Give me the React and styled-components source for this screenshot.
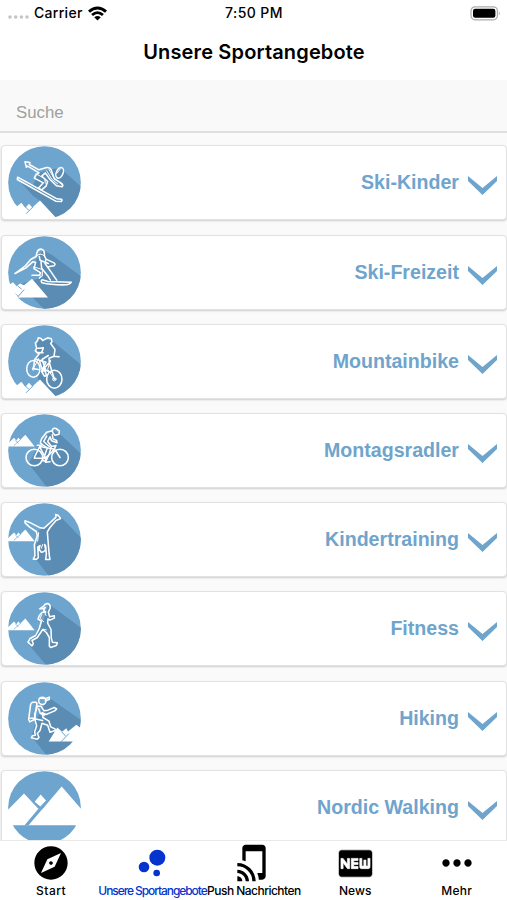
import styled, { createGlobalStyle } from 'styled-components'
import { MdExplore, MdBubbleChart, MdTapAndPlay, MdFiberNew, MdMoreHoriz } from 'react-icons/md'

const GlobalStyle = createGlobalStyle`
    * {
        box-sizing: border-box;
    }

    body {
        margin: 0;
        background: #FFF;
        font-family: Inter, "Liberation Sans", sans-serif;
        color: #000;
    }
`

const Screen = styled.div`
    display: flex;
    flex-direction: column;
    width: 507px;
    height: 900px;
    overflow: hidden;
`

const StatusBar = styled.div`
    display: grid;
    grid-template-columns: 1fr auto 1fr;
    align-items: center;
    height: 26px;
    flex: none;
    padding: 0 6px 0 8px;
    font-size: 14px;
    font-weight: 500;
    line-height: 26px;
`

const Carrier = styled.div`
    display: flex;
    align-items: center;
    gap: 5px;
    letter-spacing: 0.3px;
`

const Time = styled.span`
    margin-right: 1px;
    letter-spacing: 0.4px;
`

const Dots = styled.svg`
    margin-top: 8px;
`

const Battery = styled.div`
    display: flex;
    justify-content: flex-end;
`

const Header = styled.header`
    display: flex;
    align-items: center;
    justify-content: center;
    flex: none;
    height: 54px;
    padding-bottom: 2px;
`

const HeaderTitle = styled.h1`
    margin: 0 0 0 1px;
    font-size: 20px;
    font-weight: 600;
    letter-spacing: 0.15px;
`

const SearchInput = styled.input`
    flex: none;
    width: 100%;
    height: 52.5px;
    padding: 15px 16px 0;
    border: 0;
    border-bottom: 2px solid #DFDFDF;
    border-radius: 0;
    outline: none;
    background: #F9F9F9;
    font-family: "Liberation Sans", sans-serif;
    font-size: 16.8px;

    &::placeholder {
        color: #A0A0A0;
        opacity: 1;
    }
`

const List = styled.main`
    display: flex;
    flex-direction: column;
    gap: 14.2px;
    flex: 1;
    min-height: 0;
    overflow: hidden;
    padding: 12.9px 0 0 1px;
    background: #FAFAFA;
`

const Card = styled.section`
    display: flex;
    align-items: center;
    flex: none;
    height: 75px;
    padding: 0 9px 0 6px;
    border: 1px solid #E2E2E2;
    border-radius: 4px;
    background: #FFF;
    box-shadow: 0 1px 2px rgba(0, 0, 0, 0.18);
`

const CardTitle = styled.h2`
    flex: 1;
    margin: 0 9px 0 0;
    color: #6FA4CC;
    font-family: "Liberation Sans", sans-serif;
    font-size: 19.6px;
    font-weight: 700;
    text-align: right;
`

const Chevron = styled.svg`
    display: block;
    width: 29px;
    height: 19px;
    margin-top: 6px;
    fill: #6FA4CC;
`

const BadgeSvg = styled.svg`
    display: block;
    flex: none;
    width: 73px;
    height: 73px;
`

const TabBar = styled.nav`
    display: grid;
    grid-template-columns: repeat(5, 1fr);
    flex: none;
    height: 60px;
    border-top: 1px solid #E8E8E8;
    background: #FFF;
`

const Tab = styled.div`
    display: flex;
    flex-direction: column;
    align-items: center;
    padding: 2px 0 0 0.8px;
    min-width: 0;
    color: ${props => props.$active ? '#0433CE' : '#000'};
`

const TabIcon = styled.span`
    display: flex;
    align-items: center;
    justify-content: center;
    flex: none;
    height: 40px;

    svg {
        flex: none;
    }
`

/* a thin white outline widens the letters that are cut out of the icon */
const NewsIcon = styled(MdFiberNew)`
    stroke: #FFF;
    stroke-width: 0.4px;
`

const TabLabel = styled.span`
    font-size: 12px;
    font-weight: 500;
    line-height: 16px;
    letter-spacing: ${props => props.$spacing};
    white-space: nowrap;
`

const BLUE = '#6EA5CE'
const SHADE = '#5A8CB4'

function Badge({ shadow, children }) {
    return (
        <BadgeSvg viewBox="25 18.5 219 219" fill="none" stroke="#FFF" strokeWidth="4.6" strokeLinejoin="round" strokeLinecap="round">
            <circle cx="134.5" cy="128" r="109" fill={BLUE} stroke="none" />
            {shadow && (
                <>
                    <clipPath id="disc">
                        <circle cx="134.5" cy="128" r="109" />
                    </clipPath>
                    <path d={shadow} fill={SHADE} stroke="none" clipPath="url(#disc)" />
                </>
            )}
            {children}
        </BadgeSvg>
    )
}

/* small range on the left edge, shared by several badges */
function LeftPeaks({ y = 0 }) {
    return (
        <g transform={`translate(0 ${y})`} stroke="none">
            <path d="M24 116V108L43 90L50 98L56 90L62 96L77 81L105 116Z" fill="#FFF" />
            <path d="M43 113L63 95M48 99L56 105" stroke={BLUE} strokeWidth="2" />
        </g>
    )
}

/* peaks cut out of the lower edge */
function BottomPeaks() {
    return (
        <g stroke="none">
            <path d="M40 210L65 189L77 204L88 192L98 203L121 182L169 234L150 246H40Z" fill="#FFF" />
            <path d="M80 221L99 202M75 199L87 211" stroke={BLUE} strokeWidth="3" />
        </g>
    )
}

function SkiKids() {
    return (
        <Badge shadow="M58 122L100 136L118 99L150 90L180 85L192 94L250 145V250H168L120 182L100 168Z">
            <BottomPeaks />
            <path d="M54 112L172 177L185 178Q189 181 185 185L168 184L53 119Z" />
            <path d="M76 66L91 68L89 74L118 90L141 83Q151 82 155 91L164 117L184 129Q193 135 187 141L171 138L151 119L137 99L126 109L144 125L139 139L126 150L116 145L131 129L104 115L108 106L118 99L84 79L80 82Z" />
            <path d="M148 89L162 113L186 134M141 93L157 119L174 132M109 102L135 116L137 130" strokeWidth="3" />
            <ellipse cx="180" cy="99" rx="10" ry="17" transform="rotate(24 180 99)" />
            <path d="M173 99L182 87" strokeWidth="3" />
        </Badge>
    )
}

function SkiLeisure() {
    return (
        <Badge shadow="M98 107L130 61L155 74L250 144V250H145L60 164L124 144Z">
            <path d="M25 160L31 163L40 157L51 169L61 161L73 166L97 147L145 203H40Z" fill="#FFF" stroke="none" />
            <path d="M25 190H47L61 203L90 250H25Z" fill={BLUE} stroke="none" clipPath="url(#disc)" />
            <path d="M28 165L52 200L61 203" stroke="#FFF" strokeWidth="3" />
            <path d="M55 200L73 180M55 169L65 177" stroke={BLUE} strokeWidth="3" />
            <path d="M46 131L76 109L93 89L109 80L112 68Q115 57 126 58Q136 61 134 77L139 88L163 99Q169 103 163 108L147 111M46 131L78 115L99 96L108 97L103 116L123 129L119 136L97 136M139 88L136 101L154 126L171 151M124 97L126 115L145 139L152 151M119 80L121 91L146 101" />
            <path d="M111 78Q121 68 133 77M102 111L128 119L128 139L118 146L125 135" strokeWidth="3" />
            <path d="M128 150Q122 152 127 159Q156 166 199 165Q210 165 215 157L145 155Z" />
        </Badge>
    )
}

function Mountainbike() {
    return (
        <Badge shadow="M110 84L117 60L158 66L250 143V250H168L115 184L118 142Z">
            <BottomPeaks />
            <g>
                <ellipse cx="101" cy="150" rx="20" ry="25" />
                <ellipse cx="101" cy="150" rx="3" ry="4" strokeWidth="3" />
                <ellipse cx="164" cy="181" rx="23" ry="27" />
                <circle cx="164" cy="181" r="5" strokeWidth="3" />
                <path d="M110 85L107 73L114 64L116 57L124 59L129 65L144 57L155 60L157 69L153 74L166 92L163 112L178 114M115 104L107 96L111 88L121 88L131 87L126 101L115 104M118 106L105 122L101 149L119 153M114 101L130 102M163 112L148 118L149 132L164 181M146 110L127 122L138 153L128 158M151 129L133 149L141 171L134 172L126 158M120 128L126 149L153 160M109 121L139 130L126 156" />
                <path d="M101 149L117 119M153 124L144 151L164 181" strokeWidth="3" />
            </g>
        </Badge>
    )
}

function MondayRiders() {
    return (
        <Badge shadow="M87 168L122 103L157 66L179 77L250 143V250H151Z">
            <LeftPeaks />
            <circle cx="104" cy="149" r="25" />
            <circle cx="181" cy="149" r="25" />
            <path d="M104 149L120 116L165 124L138 151H104M120 117L138 151M165 124L181 149M156 116L169 113L164 124M113 112H125M138 151L137 163L151 162" />
            <path d="M158 67Q160 59 169 62L179 69L178 79L166 82L159 74ZM158 69L141 73L126 92L122 105L130 112L143 120L135 143L128 158L139 160L149 137L155 115L144 101L151 87L156 99L172 105L171 98L160 93L158 81M141 85L132 101L149 116" />
        </Badge>
    )
}

function KidsTraining() {
    return (
        <Badge shadow="M105 183L115 103L180 57L250 129V250H157Z">
            <LeftPeaks y={17} />
            <path d="M76 72L88 76L122 93L133 94L151 78L169 61L168 53L175 55L183 65L169 71L151 92L143 105L146 143L149 177L151 188H138L140 171L138 148L135 143L138 158Q134 166 125 166L118 157L121 146L114 151L116 182L111 187H101L106 176L104 144L113 117L110 104L90 91L76 78Z" />
            <path d="M117 107L114 133M129 143L125 154" strokeWidth="3" />
        </Badge>
    )
}

function Fitness() {
    return (
        <Badge shadow="M87 176L125 119L148 55L250 130V250H150Z">
            <LeftPeaks y={17} />
            <path d="M120 69L132 61Q137 51 147 54Q154 60 151 68L146 79L150 93L164 90L164 97L151 103L145 99L144 112L154 131L155 157L158 169L173 171L170 179L153 185L149 181L149 155L140 140L129 131L113 155L97 164L101 174L97 180L85 169L91 158L108 149L119 128L125 106L115 100L119 89L128 79L138 79L132 74L137 65L129 69Z" />
            <path d="M126 87L121 97L132 108M136 81L139 89M131 130L140 132" strokeWidth="3" />
        </Badge>
    )
}

function Hiking() {
    return (
        <Badge shadow="M96 182L110 130L147 65L250 137V250H150Z">
            <circle cx="128" cy="75" r="11" />
            <path d="M119 67L139 68L149 64L149 71L137 75M98 79H109L112 83L104 131L90 138L87 130L93 85ZM92 127H102" />
            <path d="M113 91H124L133 105L145 103L164 95L171 99L165 105L139 116L127 110L130 125L148 136L153 153L166 159L167 164L151 169L144 148L127 142L121 164L113 173L118 185L113 190L95 186L98 180L107 178L105 168L111 150L106 132L105 116ZM117 99L122 113L134 118M105 129L129 134" />
            <path d="M147 197L173 155L187 168L200 157L205 167L230 147L248 160V197Z" fill="#FFF" stroke="none" />
            <path d="M184 198L207 174M187 169L197 180" stroke={BLUE} strokeWidth="3" />
        </Badge>
    )
}

function NordicWalking() {
    return (
        <Badge>
            <path d="M20 140L73 86L116 132L130 131L186 65L248 136V181H20Z" fill="#FFF" stroke="none" />
            <path d="M123 89L139 107L122 125L105 111Z" fill="#FFF" stroke="none" />
            <path d="M74 182L117 131L134 126L86 182Z" fill={BLUE} stroke="none" />
        </Badge>
    )
}

function Wifi() {
    return (
        <svg width="19" height="15" viewBox="0 0 19 15" fill="#000">
            <path d="M0 4.6Q9.5-3.7 19 4.6L17.1 6.7Q9.5.4 1.9 6.7Z" />
            <path d="M3.1 8Q9.5 2.6 15.9 8L14 10Q9.5 6.2 5 10Z" />
            <path d="M6.2 11.3Q9.5 8.6 12.8 11.3L9.5 14.6Z" />
        </svg>
    )
}

const offers = [
    { name: 'Ski-Kinder', Icon: SkiKids },
    { name: 'Ski-Freizeit', Icon: SkiLeisure },
    { name: 'Mountainbike', Icon: Mountainbike },
    { name: 'Montagsradler', Icon: MondayRiders },
    { name: 'Kindertraining', Icon: KidsTraining },
    { name: 'Fitness', Icon: Fitness },
    { name: 'Hiking', Icon: Hiking },
    { name: 'Nordic Walking', Icon: NordicWalking },
]

const tabs = [
    { label: 'Start', Icon: MdExplore, size: 40, spacing: '0.5px' },
    { label: 'Unsere Sportangebote', Icon: MdBubbleChart, size: 40, spacing: '-1.08px', active: true },
    { label: 'Push Nachrichten', Icon: MdTapAndPlay, size: 40, spacing: '-0.53px' },
    { label: 'News', Icon: NewsIcon, size: 41, spacing: '0.1px' },
    { label: 'Mehr', Icon: MdMoreHoriz, size: 44, spacing: '0.3px' },
]

function App() {
    return (
        <Screen>
            <GlobalStyle />
            <StatusBar>
                <Carrier>
                    <Dots width="21" height="4" viewBox="0 0 21 4" fill="#C4C4C4">
                        {[2, 7.7, 13.4, 19].map(x => <circle key={x} cx={x} cy="2" r="1.8" />)}
                    </Dots>
                    Carrier
                    <Wifi />
                </Carrier>
                <Time>7:50 PM</Time>
                <Battery>
                    <svg width="31" height="15" viewBox="0 0 31 15">
                        <rect x="1" y=".8" width="26.4" height="13" rx="4" fill="#FFF" stroke="#ACACAC" strokeWidth="1.2" />
                        <rect x="3" y="2.8" width="22.4" height="9" rx="2.2" />
                        <path d="M28.8 5.3Q30.8 7.3 28.8 9.3Z" fill="#ACACAC" />
                    </svg>
                </Battery>
            </StatusBar>
            <Header>
                <HeaderTitle>Unsere Sportangebote</HeaderTitle>
            </Header>
            <SearchInput placeholder="Suche" />
            <List>
                { offers.map( ({ name, Icon }) => (
                    <Card key={name}>
                        <Icon />
                        <CardTitle>{name}</CardTitle>
                        <Chevron viewBox="0 0 87 57">
                            <path d="M0 0L43.500 36L87 0V15L43.500 57L0 15Z" />
                        </Chevron>
                    </Card>
                )) }
            </List>
            <TabBar>
                { tabs.map( ({ label, Icon, size, spacing, active }) => (
                    <Tab key={label} $active={active}>
                        <TabIcon>
                            <Icon size={size} />
                        </TabIcon>
                        <TabLabel $spacing={spacing}>{label}</TabLabel>
                    </Tab>
                )) }
            </TabBar>
        </Screen>
    )
}

export default App
